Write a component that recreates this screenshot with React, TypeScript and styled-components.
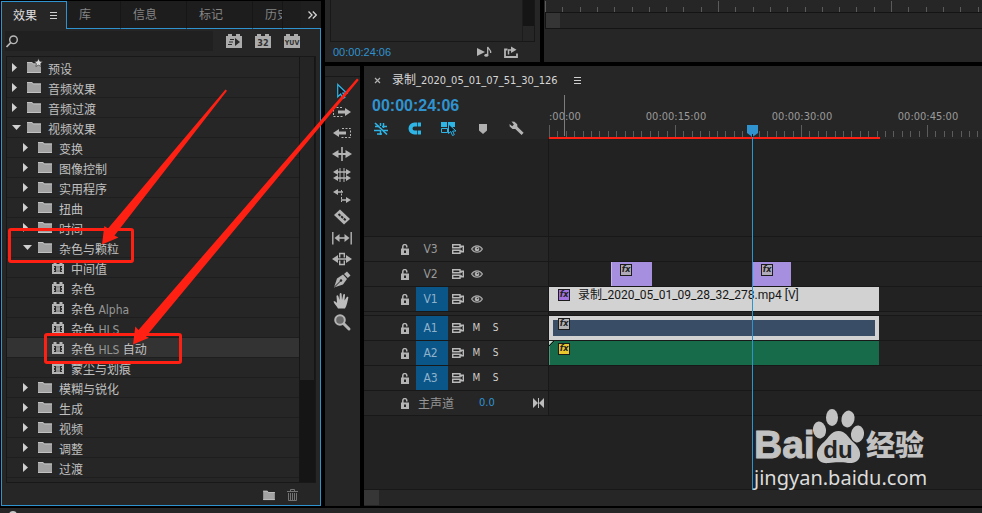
import React from "react";
import styled, { createGlobalStyle, css } from "styled-components";

const c = {
  panel: "#262626",
  lane: "#222222",
  tab: "#1d1d1d",
  line: "#181818",
  rowLine: "#1e1e1e",
  blue: "#2f93cf",
  cyan: "#2fb4e6",
  icon: "#b4b4b4",
  text: "#b8b8b8",
  dim: "#8a8a8a",
  target: "#0b5688",
  red: "#ff2014",
};

const uiFont = '"DejaVu Sans Condensed", "Noto Sans CJK SC", sans-serif';
const PX_PER_SECOND = 8.4;

const GlobalStyle = createGlobalStyle`
  *, *::before, *::after { box-sizing: border-box; }
  body { margin: 0; background: #000; color: ${c.text}; font: 11px/16px ${uiFont}; overflow: hidden; }
  button, input { font: inherit; color: inherit; background: none; border: 0; padding: 0; margin: 0; }
  svg { display: block; flex: none; }
  ul { list-style: none; margin: 0; padding: 0; }
`;

/* ---------- shell ---------- */

const Shell = styled.div`
  position: relative;
  height: 100vh;
  display: flex;
  flex-direction: column;
  gap: 2px;
  overflow: hidden;
`;
const Workspace = styled.main`
  flex: 1;
  min-height: 0;
  display: grid;
  grid-template-columns: 320px minmax(0, 1fr);
  gap: 4px;
  padding-left: 1px;
`;
const RightSide = styled.div`
  display: grid;
  grid-template-rows: 62px minmax(0, 1fr);
  gap: 4px;
  min-width: 0;
`;
const Monitors = styled.div`
  display: grid;
  grid-template-columns: 215px minmax(0, 1fr);
  gap: 4px;
`;
const Editing = styled.div`
  display: grid;
  grid-template-columns: 35px minmax(0, 1fr);
  gap: 4px;
  min-height: 0;
`;
const BottomStrip = styled.footer`
  height: 5px;
  background: ${c.panel};
  overflow: hidden;
  padding: 3px 0 0 9px;
`;

/* ---------- effects panel ---------- */

const EffectsPanel = styled.section`
  display: flex;
  flex-direction: column;
  min-height: 0;
  margin-top: 1px;
  background: ${c.panel};
  border: solid ${c.blue};
  border-width: 0 1px 1px;
`;
const TabBar = styled.div`
  display: flex;
  height: 28px;
  flex: none;
  margin-right: -1px;
  font-size: 12px;
`;
const Tab = styled.button<{ $active?: boolean }>`
  height: 28px;
  padding: 0 29px 0 12px;
  white-space: nowrap;
  overflow: hidden;
  text-align: left;
  color: #858585;
  background: ${c.tab};
  border-right: 1px solid #161616;
  border-bottom: 1px solid ${c.blue};
  ${(p) =>
    p.$active &&
    css`
      display: flex;
      align-items: center;
      gap: 13px;
      width: 65px;
      padding: 0 0 0 11px;
      color: #e0e0e0;
      background: ${c.panel};
      border: solid ${c.blue};
      border-width: 1px 1px 0 0;
    `}
`;
const ClippedTab = styled(Tab)`
  width: 30px;
  padding-right: 0;
`;
const TabRest = styled.div`
  flex: 1;
  background: ${c.tab};
  border-bottom: 1px solid ${c.blue};
`;
const TabOverflow = styled.button`
  width: 20px;
  display: flex;
  align-items: center;
  padding-left: 7px;
  background: #1f1f1f;
  border-bottom: 1px solid ${c.blue};
`;
const SearchRow = styled.div`
  display: flex;
  align-items: center;
  height: 27px;
  flex: none;
  padding: 0 20px 3px 3px;
  gap: 13px;
`;
const SearchBox = styled.label`
  flex: 1;
  min-width: 0;
  height: 20px;
  display: flex;
  align-items: center;
  background: #202020;
  input {
    flex: 1;
    min-width: 0;
    outline: none;
    font-size: 12px;
  }
`;
const IconButton = styled.button`
  display: flex;
  align-items: center;
  justify-content: center;
`;
const TreeFrame = styled.div`
  flex: 1;
  min-height: 0;
  display: grid;
  grid-template-columns: minmax(0, 1fr) 16px;
  margin: 0 4px 0 4px;
  border: 1px solid ${c.line};
  overflow: hidden;
`;
const Tree = styled.ul`
  overflow: hidden;
  padding-top: 1px;
  font-size: 12px;
`;
const TreeRow = styled.li<{ $level: number; $selected?: boolean }>`
  display: flex;
  align-items: center;
  height: 20px;
  padding-left: ${(p) => [5, 16, 45][p.$level]}px;
  border-bottom: 1px solid ${c.rowLine};
  background: ${(p) => (p.$selected ? "#333333" : "transparent")};
  white-space: nowrap;
  color: #c0c0c0;
`;
const Twist = styled.span`
  width: 15px;
  flex: none;
`;
const FolderSlot = styled.span`
  padding-bottom: 2px;
`;
const TreeLabel = styled.span<{ $leaf?: boolean }>`
  padding-top: 4px;
  margin-left: 7px;
`;
const Latin = styled.span`
  color: #969696;
`;
const TreeScroll = styled.div`
  background: #151515;
  border-left: 1px solid #161616;
`;
const TreeThumb = styled.div`
  height: 76%;
  background: #242424;
  margin-right: 1px;
`;
const PanelFooter = styled.div`
  flex: none;
  height: 22px;
  display: flex;
  align-items: center;
  justify-content: flex-end;
  gap: 12px;
  padding: 2px 22px 0 0;
`;

/* ---------- monitors ---------- */

const SourcePanel = styled.section`
  background: ${c.panel};
  display: flex;
  flex-direction: column;
  padding: 0 5px;
`;
const SourceView = styled.div`
  height: 42px;
  border: solid ${c.line};
  border-width: 0 1px 1px;
  display: flex;
  justify-content: flex-end;
`;
const SourceScroll = styled.div`
  width: 12px;
  border-left: 1px solid #1c1c1c;
  div {
    height: 26px;
    background: #151515;
  }
`;
const SourceBar = styled.div`
  flex: 1;
  display: flex;
  align-items: center;
  padding: 0 17px 0 3px;
  gap: 12px;
`;
const SmallTime = styled.span`
  flex: 1;
  font: 11px/16px "Liberation Sans", sans-serif;
  color: ${c.blue};
`;
const ProgramPanel = styled.section`
  background: ${c.panel};
  padding-left: 1px;
  overflow: hidden;
`;
const ProgramScroll = styled.div`
  height: 17px;
  border: solid #141414;
  border-width: 1px 0 1px 1px;
  div {
    width: 14px;
    height: 15px;
    background: #353535;
  }
`;

/* ---------- tools ---------- */

const Tools = styled.nav`
  background: ${c.panel};
  display: flex;
  flex-direction: column;
`;
const ToolsGrip = styled.div`
  height: 11px;
  margin-bottom: 3px;
  border-bottom: 1px solid ${c.line};
`;
const ToolButton = styled(IconButton)`
  height: 21px;
  padding-right: 2px;
`;

/* ---------- timeline ---------- */

const Timeline = styled.section`
  position: relative;
  display: flex;
  flex-direction: column;
  min-height: 0;
  overflow: hidden;
  background: ${c.panel};
`;
const SequenceTab = styled.div`
  height: 28px;
  flex: none;
  display: flex;
  align-items: center;
  padding-left: 10px;
  color: #d6d6d6;
`;
const SequenceName = styled.span`
  margin: 0 16px 0 11px;
  white-space: nowrap;
`;
const Cjk = styled.span`
  font-size: 12px;
`;
const TimelineHead = styled.div`
  display: grid;
  grid-template-columns: 185px minmax(0, 1fr);
  height: 45px;
  flex: none;
`;
const BigTime = styled.div`
  height: 24px;
  padding-left: 8px;
  font: bold 16px/24px "Liberation Sans", sans-serif;
  color: ${c.blue};
`;
const TimelineTools = styled.div`
  display: grid;
  grid-template-columns: 34px 32px 38px 30px 36px;
  height: 21px;
`;
const Ruler = styled.div`
  position: relative;
  overflow: hidden;
`;
const RulerLabel = styled.span<{ $first?: boolean }>`
  position: absolute;
  top: 15px;
  transform: ${(p) => (p.$first ? "none" : "translateX(-50%)")};
  color: #9a9a9a;
  white-space: nowrap;
`;
const RulerTicks = styled.svg`
  position: absolute;
  left: 0;
  top: 0;
`;
const Tracks = styled.div`
  position: relative;
  flex: 1;
  min-height: 0;
  display: flex;
  flex-direction: column;
`;
const TrackRow = styled.div<{ $h: number; $plain?: boolean }>`
  display: grid;
  grid-template-columns: 185px minmax(0, 1fr);
  height: ${(p) => p.$h}px;
  flex: none;
  border-bottom: 1px solid ${c.line};
  background: ${(p) => (p.$plain ? c.lane : c.panel)};
`;
const TrackRest = styled(TrackRow)`
  flex: 1;
  height: auto;
`;
const TrackHead = styled.div`
  display: flex;
  align-items: center;
  padding-left: 37px;
  border-right: 1px solid ${c.line};
  color: #a8a8a8;
`;
const Target = styled.button<{ $on?: boolean }>`
  width: 32px;
  height: 24px;
  margin: 0 4px 0 7px;
  padding-right: 3px;
  font-size: 12px;
  background: ${(p) => (p.$on ? c.target : "transparent")};
  color: ${(p) => (p.$on ? "#8fb2cc" : "#9a9a9a")};
`;
const Eye = styled(IconButton)`
  margin-left: 7px;
`;
const Letter = styled.button`
  width: 19px;
  font-size: 10px;
  color: #d0d0d0;
`;
const Letters = styled.div`
  display: flex;
  margin-left: 3px;
`;
const MasterName = styled.span`
  margin-left: 9px;
  padding-top: 2px;
  width: 61px;
  font-size: 12px;
  color: #969696;
`;
const MasterLevel = styled.span`
  flex: 1;
  color: ${c.blue};
`;
const MasterMeter = styled.span`
  padding-right: 4px;
`;
const Lane = styled.div`
  position: relative;
  background: ${c.lane};
  overflow: hidden;
`;
const clipTone = {
  purple: "background: #a78fdf; box-shadow: inset 1px 0 0 #c4b4ec;",
  light: "background: #d2d2d2;",
  audio: "background: #3a4d66; box-shadow: inset 0 0 0 4px #d2d2d2;",
  green: "background: #176b4b; box-shadow: inset 1px 0 0 #4f9277;",
};
const Clip = styled.div<{ $tone: keyof typeof clipTone }>`
  position: absolute;
  top: 0;
  bottom: 0;
  display: flex;
  align-items: flex-start;
  gap: 8px;
  padding: 2px 0 0 9px;
  color: #161616;
  white-space: nowrap;
  ${(p) => clipTone[p.$tone]}
`;
const CornerCut = styled.svg`
  position: absolute;
  left: 0;
  top: 0;
`;
const ClipName = styled.span`
  margin-top: -2px;
  font: 12px/16px Roboto, "Noto Sans CJK SC", sans-serif;
`;
const Fx = styled.span<{ $bg: string }>`
  width: 12px;
  height: 12px;
  border: 1px solid #1c1c1c;
  background: ${(p) => p.$bg};
  color: #222;
  font: italic bold 9px/9px "DejaVu Sans Condensed", sans-serif;
  text-align: center;
  flex: none;
`;
const PlayheadLine = styled.div`
  position: absolute;
  top: 0;
  bottom: 0;
  width: 1px;
  background: ${c.blue};
`;
const PlayheadLayer = styled.div`
  position: absolute;
  inset: 0 0 0 185px;
  pointer-events: none;
`;
const TimelineScroll = styled.div`
  height: 16px;
  flex: none;
  div {
    width: 15px;
    height: 15px;
    background: #363636;
  }
`;

/* ---------- overlays ---------- */

const Arrows = styled.svg`
  position: absolute;
  left: 0;
  top: 0;
  pointer-events: none;
`;
const Callout = styled.div<{ $x: number; $y: number; $w: number; $h: number }>`
  position: absolute;
  left: ${(p) => p.$x}px;
  top: ${(p) => p.$y}px;
  width: ${(p) => p.$w}px;
  height: ${(p) => p.$h}px;
  border: 3px solid ${c.red};
  border-radius: 3px;
  pointer-events: none;
`;
const Watermark = styled.div`
  position: absolute;
  right: 52px;
  bottom: 22px;
  width: 178px;
  color: #c2c2c2;
  pointer-events: none;
`;
const Brand = styled.div`
  display: flex;
  align-items: flex-end;
  height: 57px;
  padding-left: 2px;
  font: bold 39px/40px "Liberation Sans", sans-serif;
`;
const BrandBai = styled.span`
  width: 58px;
  height: 40px;
  -webkit-text-stroke: 1px #c2c2c2;
`;
const BrandCn = styled.span`
  margin-left: 2px;
  height: 42px;
  font: 900 29px/40px "Noto Sans CJK SC", sans-serif;
`;
const Site = styled.div`
  font: 20px/26px "Noto Sans", sans-serif;
  color: #dcdcdc;
  padding-left: 2px;
`;

/* ---------- icons ---------- */

const MenuIcon = () => (
  <svg width="7" height="7" stroke="#cfcfcf">
    <path d="M0 .5h7M0 3.5h7M0 6.5h7" />
  </svg>
);
const Folder = ({ w = 14, star = false }: { w?: number; star?: boolean }) => (
  <svg width={w} height={w - 2} viewBox="0 0 14 12" overflow="visible">
    <path d="M0 1h5l1.3 1.500H14V12H0z" fill="#a2a2a2" />
    <path d="M0 1.500h5l1.300 1.500H14M0 11.500h14" fill="none" stroke="#c2c2c2" />
    {star && (
      <path
        d="M11.500-2.500l1.300 2.700 2.900.4-2.100 2 .5 2.900-2.600-1.400-2.600 1.400.5-2.900-2.100-2 2.900-.4z"
        fill="#d8d8d8"
        stroke="#262626"
        strokeWidth=".6"
      />
    )}
  </svg>
);
const FilmIcon = () => (
  <svg width="12" height="12">
    <path d="M0 2h1.500V0h3v2h3V0h3v2H12v10H0z" fill="#b4b4b4" />
    <path d="M2 4h8v6H2z" fill="#2a2a2a" />
    <path d="M4 4h4v6H4z" fill="#8c8c8c" />
    <path d="M4 7h4" stroke="#a8a8a8" />
    <path d="M2.500 5v1M2.500 8v1M9.500 5v1M9.500 8v1" stroke="#9a9a9a" />
  </svg>
);
const Brick = ({ children }: { children: React.ReactNode }) => (
  <svg width="16" height="14">
    <path d="M0 2h2V0h4v2h4V0h4v2h2v12H0z" fill="#acacac" />
    {children}
  </svg>
);
const BrickText = styled.text`
  font-family: "DejaVu Sans Condensed", sans-serif;
  font-weight: bold;
  fill: #303030;
  text-anchor: middle;
`;
const LockIcon = () => (
  <svg width="8" height="11">
    <path d="M1.800 5V2.600a2 2 0 0 1 4 0V3.600" fill="none" stroke="#b4b4b4" strokeWidth="1.500" />
    <path d="M0 4.500h8V11H0z" fill="#b4b4b4" />
    <path d="M3 6.500h2v2.500H3z" fill="#262626" />
  </svg>
);
const SyncIcon = () => (
  <svg width="12" height="10" fill="none" stroke="#bababa">
    <path d="M0 .700h8v3H.700V.700M0 6.300h8v3H.700V6.300" strokeWidth="1.400" />
    <path d="M8 2.200h3.300v5.500H8M9 2v2M9 6v2" strokeWidth="1.400" />
  </svg>
);
const EyeIcon = () => (
  <svg width="12" height="8">
    <path d="M.6 4C3-.3 9-.3 11.400 4 9 8.300 3 8.300.6 4z" fill="#3a3a3a" stroke="#a6a6a6" strokeWidth="1.200" />
    <circle cx="6" cy="4" r="2.200" fill="#b4b4b4" />
    <circle cx="6.500" cy="3.500" r=".8" fill="#3a3a3a" />
  </svg>
);

const toolIcons: { name: string; draw: React.ReactNode }[] = [
  {
    name: "选择",
    draw: <path d="M5.700 3.500v12.300l3-2.800 2 4.500 2.200-1-2-4.300h3.900z" fill="#101820" stroke={c.cyan} strokeWidth="1.200" />,
  },
  {
    name: "向前选择轨道",
    draw: (
      <>
        <path d="M10 5.500H1.500v9H11" fill="none" stroke={c.icon} strokeDasharray="2 1.500" />
        <path d="M6 8.500h7V6l6 4-6 4v-2.500H6z" fill={c.icon} />
      </>
    ),
  },
  {
    name: "向后选择轨道",
    draw: (
      <>
        <path d="M10 5.500h8.500v9H9" fill="none" stroke={c.icon} strokeDasharray="2 1.500" />
        <path d="M14 8.500H7V6l-6 4 6 4v-2.500h7z" fill={c.icon} />
      </>
    ),
  },
  {
    name: "波纹编辑",
    draw: (
      <>
        <path d="M10 3v14" stroke={c.icon} strokeWidth="1.600" />
        <path d="M0 10l6.500-4v3h7V6l6.500 4-6.500 4v-3h-7v3z" fill={c.icon} />
      </>
    ),
  },
  {
    name: "滚动编辑",
    draw: (
      <>
        <path d="M8 3v14M12 3v14" stroke={c.icon} />
        <path d="M3 7h14M3 13h14" stroke={c.icon} strokeWidth="1.400" />
        <path d="M1 7l5-3v6zM19 7l-5-3v6zM1 13l5-3v6zM19 13l-5-3v6z" fill={c.icon} />
      </>
    ),
  },
  {
    name: "比率拉伸",
    draw: (
      <>
        <path d="M5 6h6M9 14h6" stroke={c.icon} strokeWidth="1.400" />
        <path d="M9.500 4v12" stroke={c.icon} strokeDasharray="2 1.500" />
        <path d="M1 6l5-3v6zM19 14l-5-3v6z" fill={c.icon} />
      </>
    ),
  },
  {
    name: "剃刀",
    draw: (
      <>
        <path d="M8 2.500L18 12l-6 5.500L2 8z" fill={c.icon} />
        <path d="M6.500 7l7.500 6.500" stroke="#262626" strokeWidth="2" fill="none" strokeDasharray="2.500 1" />
      </>
    ),
  },
  {
    name: "外滑",
    draw: (
      <>
        <path d="M.8 4v12.500M19.200 4v12.500" stroke={c.icon} strokeWidth="1.400" />
        <path d="M5 10h10" stroke={c.icon} strokeWidth="1.600" />
        <path d="M2.500 10l5-4v8zM17.500 10l-5-4v8z" fill={c.icon} />
      </>
    ),
  },
  {
    name: "内滑",
    draw: (
      <>
        <path d="M4 10h12" stroke={c.icon} strokeWidth="1.500" />
        <path d="M7.700 8.500v-4h4.600v4M7.700 11.500v4h4.600v-4" fill="none" stroke={c.icon} strokeWidth="1.400" />
        <path d="M0 10l6-4v8zM20 10l-6-4v8z" fill={c.icon} />
      </>
    ),
  },
  {
    name: "钢笔",
    draw: (
      <>
        <path d="M2 17.500l3-9 6-4 4 4.500-4 5.500z" fill={c.icon} />
        <path d="M12 4l3-2.500 3.500 4L15.800 8z" fill={c.icon} />
        <path d="M2.500 17l6-6" stroke="#262626" />
        <circle cx="9" cy="10.500" r="1.200" fill="#262626" />
      </>
    ),
  },
  {
    name: "手形",
    draw: (
      <path
        d="M6 17.500c-1-2.500-4-4.500-4.500-7 .8-.8 2-.3 3.500 1.500L4.500 5c.2-1 1.500-1 1.800 0L7.500 9l.2-6c.2-1.200 1.700-1.200 1.900 0L10 9l1.300-5.500c.4-1 1.700-.7 1.700.4L12.500 9.500l2.300-3.500c.7-.8 1.800-.2 1.500.8-.8 3.500-1.300 7.700-3.300 10.700z"
        fill="#bcbcbc"
      />
    ),
  },
  {
    name: "缩放",
    draw: (
      <>
        <circle cx="8" cy="8" r="4.800" fill="#686868" stroke={c.icon} strokeWidth="2" />
        <path d="M12 12l5 5" stroke={c.icon} strokeWidth="3" strokeLinecap="round" />
      </>
    ),
  },
];

/* ---------- data ---------- */

type Node = { level: 0 | 1 | 2; kind: "open" | "closed" | "effect"; label: React.ReactNode; star?: boolean; selected?: boolean };
const nodes: Node[] = [
  { level: 0, kind: "closed", label: "预设", star: true },
  { level: 0, kind: "closed", label: "音频效果" },
  { level: 0, kind: "closed", label: "音频过渡" },
  { level: 0, kind: "open", label: "视频效果" },
  { level: 1, kind: "closed", label: "变换" },
  { level: 1, kind: "closed", label: "图像控制" },
  { level: 1, kind: "closed", label: "实用程序" },
  { level: 1, kind: "closed", label: "扭曲" },
  { level: 1, kind: "closed", label: "时间" },
  { level: 1, kind: "open", label: "杂色与颗粒" },
  { level: 2, kind: "effect", label: "中间值" },
  { level: 2, kind: "effect", label: "杂色" },
  { level: 2, kind: "effect", label: <>杂色 <Latin>Alpha</Latin></> },
  { level: 2, kind: "effect", label: <>杂色 <Latin>HLS</Latin></> },
  { level: 2, kind: "effect", label: <>杂色 <Latin>HLS</Latin> 自动</>, selected: true },
  { level: 2, kind: "effect", label: "蒙尘与划痕" },
  { level: 1, kind: "closed", label: "模糊与锐化" },
  { level: 1, kind: "closed", label: "生成" },
  { level: 1, kind: "closed", label: "视频" },
  { level: 1, kind: "closed", label: "调整" },
  { level: 1, kind: "closed", label: "过渡" },
  { level: 1, kind: "closed", label: "" },
];

type ClipData = { start: number; length: number; tone: keyof typeof clipTone; fx: string; name?: React.ReactNode };
type TrackData = { id: string; on?: boolean; audio?: boolean; clips: ClipData[] };
const videoTracks: TrackData[] = [
  { id: "V3", clips: [] },
  {
    id: "V2",
    clips: [
      { start: 7.4, length: 4.9, tone: "purple", fx: "#b0aab8" },
      { start: 24.2, length: 4.7, tone: "purple", fx: "#b0aab8" },
    ],
  },
  {
    id: "V1",
    on: true,
    clips: [
      {
        start: 0,
        length: 39.3,
        tone: "light",
        fx: "#a272e0",
        name: "录制_2020_05_01_09_28_32_278.mp4 [V]",
      },
    ],
  },
];
const audioTracks: TrackData[] = [
  { id: "A1", on: true, audio: true, clips: [{ start: 0, length: 39.3, tone: "audio", fx: "#b4b4b4" }] },
  { id: "A2", on: true, audio: true, clips: [{ start: 0, length: 39.3, tone: "green", fx: "#e8c62c" }] },
  { id: "A3", on: true, audio: true, clips: [] },
];
const labels: [number, string][] = [
  [0, ":00:00"],
  [15, "00:00:15:00"],
  [30, "00:00:30:00"],
  [45, "00:00:45:00"],
];
const PLAYHEAD = 24.2;

const at = (seconds: number) => Math.round(seconds * PX_PER_SECOND);

/* ---------- parts ---------- */

const TreeItem = ({ node }: { node: Node }) => (
  <TreeRow $level={node.level} $selected={node.selected}>
    {node.kind === "effect" ? (
      <FilmIcon />
    ) : (
      <>
        <Twist>
          {node.kind === "open" ? (
            <svg width="9" height="5"><path d="M0 0h9L4.500 5z" fill="#d0d0d0" /></svg>
          ) : (
            <svg width="5" height="9"><path d="M0 0v9l5-4.500z" fill="#d0d0d0" /></svg>
          )}
        </Twist>
        <FolderSlot><Folder star={node.star} /></FolderSlot>
      </>
    )}
    <TreeLabel>{node.label}</TreeLabel>
  </TreeRow>
);

const Track = ({ track }: { track: TrackData }) => (
  <TrackRow $h={25}>
    <TrackHead>
      <IconButton aria-label={`锁定 ${track.id}`}><LockIcon /></IconButton>
      <Target $on={track.on}>{track.id}</Target>
      <IconButton aria-label={`同步锁定 ${track.id}`}><SyncIcon /></IconButton>
      {track.audio ? (
        <Letters>
          <Letter>M</Letter>
          <Letter>S</Letter>
        </Letters>
      ) : (
        <Eye aria-label={`显示 ${track.id}`}><EyeIcon /></Eye>
      )}
    </TrackHead>
    <Lane>
      {track.clips.map((clip) => (
        <Clip key={clip.start} $tone={clip.tone} style={{ left: at(clip.start), width: at(clip.length) }}>
          <Fx $bg={clip.fx}>fx</Fx>
          {clip.name && <ClipName>{clip.name}</ClipName>}
          {clip.tone === "green" && (
            <CornerCut width="5" height="5"><path d="M0 0h4L0 4z" fill="#c8d4cc" /><path d="M0 5l5-5" stroke="#111" /></CornerCut>
          )}
        </Clip>
      ))}
    </Lane>
  </TrackRow>
);

const Effects = () => (
  <EffectsPanel>
    <TabBar>
      <Tab $active>效果 <MenuIcon /></Tab>
      <Tab>库</Tab>
      <Tab>信息</Tab>
      <Tab>标记</Tab>
      <ClippedTab>历史</ClippedTab>
      <TabRest />
      <TabOverflow aria-label="更多面板">
        <svg width="9" height="8" fill="none" stroke="#d4d4d4" strokeWidth="1.300">
          <path d="M.5.5L4 4 .5 7.500M4.800.5L8.300 4 4.800 7.500" />
        </svg>
      </TabOverflow>
    </TabBar>
    <SearchRow>
      <SearchBox>
        <svg width="14" height="13" fill="none" stroke="#b8b8b8">
          <circle cx="8.500" cy="4.800" r="3.800" strokeWidth="1.400" />
          <path d="M5.800 7.500L1.500 12" strokeWidth="1.800" />
        </svg>
        <input aria-label="搜索效果" />
      </SearchBox>
      <IconButton aria-label="加速效果">
        <Brick>
          <path d="M9 4v8l5-4z" fill="#2a2a2a" />
          <path d="M4 5.500h4M3 8h4M2 10.500h4" stroke="#2a2a2a" />
        </Brick>
      </IconButton>
      <IconButton aria-label="32 位颜色">
        <Brick><BrickText x="8" y="11.500" fontSize="9">32</BrickText></Brick>
      </IconButton>
      <IconButton aria-label="YUV 效果">
        <Brick><BrickText x="8" y="11" fontSize="7">YUV</BrickText></Brick>
      </IconButton>
    </SearchRow>
    <TreeFrame>
      <Tree>{nodes.map((n, i) => <TreeItem key={i} node={n} />)}</Tree>
      <TreeScroll><TreeThumb /></TreeScroll>
    </TreeFrame>
    <PanelFooter>
      <IconButton aria-label="新建自定义素材箱"><Folder w={12} /></IconButton>
      <IconButton aria-label="删除">
        <svg width="11" height="12" fill="none" stroke="#747474">
          <path d="M0 2.500h11M3.500 2V.5h4V2M1.500 4v7.500h8V4M3.500 4v7M5.500 4v7M7.500 4v7" />
        </svg>
      </IconButton>
    </PanelFooter>
  </EffectsPanel>
);

const Source = () => (
  <SourcePanel>
    <SourceView><SourceScroll><div /></SourceScroll></SourceView>
    <SourceBar>
      <SmallTime>00:00:24:06</SmallTime>
      <IconButton aria-label="播放音频">
        <svg width="15" height="12" fill={c.icon}>
          <path d="M0 2v8l8-4z" />
          <ellipse cx="9.300" cy="9.300" rx="2" ry="1.500" />
          <path d="M10.700 9V1c.5 2 3.500 2.500 3 6" fill="none" stroke={c.icon} strokeWidth="1.300" />
        </svg>
      </IconButton>
      <IconButton aria-label="导出">
        <svg width="14" height="12" fill="none" stroke={c.icon} strokeWidth="1.800">
          <path d="M3.500 3.500H1v7.500h12V7.500" />
          <path d="M4.500 8.500V4H8" strokeWidth="1.500" />
          <path d="M7 .5v6.500l5.500-3.200z" fill={c.icon} stroke="none" />
        </svg>
      </IconButton>
    </SourceBar>
  </SourcePanel>
);

const Program = () => (
  <ProgramPanel>
    <svg width="100%" height="12" stroke="#5a5a5a">
      {Array.from({ length: 120 }, (_, i) => {
        const x = Math.round(i * 17.3) + 0.5;
        return <line key={i} x1={x} x2={x} y1={i % 10 ? 7 : 1} y2="12" />;
      })}
    </svg>
    <ProgramScroll><div /></ProgramScroll>
  </ProgramPanel>
);

const TimelinePanel = () => (
  <Timeline>
    <SequenceTab>
      <IconButton aria-label="关闭序列">
        <svg width="7" height="7" stroke="#b0b0b0" strokeWidth="1.200"><path d="M1 1l5 5M6 1L1 6" /></svg>
      </IconButton>
      <SequenceName><Cjk>录制</Cjk>_2020_05_01_07_51_30_126</SequenceName>
      <MenuIcon />
    </SequenceTab>
    <TimelineHead>
      <div>
        <BigTime>00:00:24:06</BigTime>
        <TimelineTools>
          <IconButton aria-label="嵌套序列">
            <svg width="14" height="14" fill="none" stroke={c.cyan}>
              <path d="M1 4.500h4M8 4.500h5M0 8.500h6M9 8.500h5M3 12h5M6.500 1v3M6.500 8v5M9.500 1v5" strokeWidth="1.500" />
              <path d="M1 1l12 11.500" strokeWidth="1.700" />
            </svg>
          </IconButton>
          <IconButton aria-label="对齐">
            <svg width="13" height="13" fill="none" stroke={c.cyan} strokeWidth="4">
              <path d="M13 2.500H6.500a4 4 0 0 0 0 8H13" />
              <path d="M9.500 0v13" stroke={c.panel} strokeWidth=".7" />
            </svg>
          </IconButton>
          <IconButton aria-label="链接选择项">
            <svg width="16" height="14">
              <path d="M0 0h6v5H0zM7 0h7v5H7z" fill={c.cyan} />
              <path d="M.5 6.500h6v4h-6z" fill="none" stroke={c.cyan} />
              <path d="M7.500 2v9.500l2.300-2 1.700 4 1.800-.8-1.700-3.700h3.400z" fill="#0d1a22" stroke={c.cyan} />
            </svg>
          </IconButton>
          <IconButton aria-label="添加标记">
            <svg width="8" height="10"><path d="M0 0h8v6.500L4 10 0 6.500z" fill="#b0b0b0" /></svg>
          </IconButton>
          <IconButton aria-label="时间轴显示设置">
            <svg width="15" height="15">
              <path d="M2.500.5l3 .3 2.700 2.500.2 2.500 6.200 6-2 2.300-6.300-6.200-2.800.1L.7 5.600.5 3l2.700 2.300 1.700-1.700z" fill="#b4b4b4" />
            </svg>
          </IconButton>
        </TimelineTools>
      </div>
      <Ruler>
        {labels.map(([s, text]) => (
          <RulerLabel key={s} $first={s === 0} style={{ left: s === 0 ? 0 : at(s) + 1 }}>{text}</RulerLabel>
        ))}
        <RulerTicks width="100%" height="45">
          {Array.from({ length: 300 }, (_, i) => {
            const x = at(i) + 0.5;
            return <line key={i} x1={x} x2={x} y1={i % 15 ? 37 : 31} y2="43" stroke="#5c5c5c" />;
          })}
          <path d="M15.500 1v41" stroke="#7c7c7c" />
          <path d={`M0 44h${at(39.400)}`} stroke={c.red} strokeWidth="2" />
          <path d={`M${at(PLAYHEAD) - 5} 31h11v8l-5.500 4-5.500-4z`} fill={c.blue} />
          <path d={`M${at(PLAYHEAD) + 0.5} 40v3`} stroke="#111" />
          <path d={`M${at(PLAYHEAD) + 0.5} 43v2`} stroke={c.blue} />
        </RulerTicks>
      </Ruler>
    </TimelineHead>
    <Tracks>
      <TrackRow $h={98} $plain>
        <TrackHead />
        <Lane />
      </TrackRow>
      {videoTracks.map((t) => <Track key={t.id} track={t} />)}
      <TrackRow $h={4}>
        <TrackHead />
      </TrackRow>
      {audioTracks.map((t) => <Track key={t.id} track={t} />)}
      <TrackRow $h={25}>
        <TrackHead>
          <IconButton aria-label="锁定 主声道"><LockIcon /></IconButton>
          <MasterName>主声道</MasterName>
          <MasterLevel>0.0</MasterLevel>
          <MasterMeter>
            <svg width="11" height="10" fill="#bcbcbc">
              <path d="M0 0l5 5-5 5zM11 0L6 5l5 5zM5 0h1v10H5z" />
            </svg>
          </MasterMeter>
        </TrackHead>
        <Lane />
      </TrackRow>
      <TrackRest $h={0} $plain>
        <div />
        <Lane />
      </TrackRest>
      <PlayheadLayer>
        <PlayheadLine style={{ left: at(PLAYHEAD) }} />
      </PlayheadLayer>
    </Tracks>
    <TimelineScroll><div /></TimelineScroll>
  </Timeline>
);

export default function App() {
  return (
    <Shell>
      <GlobalStyle />
      <Workspace>
        <Effects />
        <RightSide>
          <Monitors>
            <Source />
            <Program />
          </Monitors>
          <Editing>
            <Tools>
              <ToolsGrip />
              {toolIcons.map((t) => (
                <ToolButton key={t.name} aria-label={t.name}>
                  <svg width="20" height="20">{t.draw}</svg>
                </ToolButton>
              ))}
            </Tools>
            <TimelinePanel />
          </Editing>
        </RightSide>
      </Workspace>
      <BottomStrip>
        <svg width="8" height="8"><circle cx="4" cy="4" r="4" fill="#c8c8c8" /></svg>
      </BottomStrip>

      <Arrows width="400" height="400" fill={c.red}>
        <path d="M225.500 89.500l1.500 1.300L114.500 235.500l4 2-16.500 7 2.300-18.500 3.700 2.500z" />
        <path d="M357 78.500l1.800 1.500L146 336.500l3 1.300-16 6.700 2.300-18 3.200 3.500z" />
      </Arrows>
      <Callout $x={8} $y={228} $w={126} $h={35} />
      <Callout $x={44} $y={333} $w={138} $h={31} />

      <Watermark>
        <Brand>
          <BrandBai>Bai</BrandBai>
          <svg width="52" height="57" viewBox="0 0 52 57" fill="#c2c2c2">
            <ellipse cx="7.500" cy="22" rx="6.500" ry="8.500" transform="rotate(-8 7.500 22)" />
            <ellipse cx="20" cy="9.500" rx="6" ry="8.500" />
            <ellipse cx="36" cy="11" rx="6.500" ry="8.500" transform="rotate(12 36 11)" />
            <ellipse cx="45.500" cy="26" rx="6.500" ry="8.500" transform="rotate(8 45.500 26)" />
            <path d="M26.500 23c7 0 9.500 6 14 10.500C45 37.500 49 42 48 48c-1 6-7 7.500-12 7-4-.8-6-.8-9.500-.8s-6 .2-10 .8c-5 .7-10.500-1-11.500-7-.8-6 3-10.500 7-14C16.500 29.500 19.500 23 26.500 23z" />
            <text x="26" y="50" fill="#242424" fontSize="24" fontWeight="bold" textAnchor="middle">du</text>
          </svg>
          <BrandCn>经验</BrandCn>
        </Brand>
        <Site>jingyan.baidu.com</Site>
      </Watermark>
    </Shell>
  );
}
